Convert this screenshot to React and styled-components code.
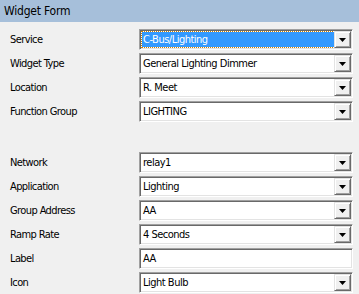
import React from 'react'
import styled, { createGlobalStyle } from 'styled-components'

const Global = createGlobalStyle`
  html, body { margin: 0; padding: 0; background: #f0f0f0; }
  body { font-family: "DejaVu Sans Condensed", "DejaVu Sans", sans-serif; font-size: 11px; color: #000; }
`

const Panel = styled.div`
  width: 359px;
  height: 294px;
  overflow: hidden;
  background: #f0f0f0;
`

const Header = styled.div`
  height: 22px;
  background: #a6bfda;
  padding-left: 4px;
  display: flex;
  align-items: center;
  font-size: 12px;
  letter-spacing: -0.2px;
`

const Section = styled.div`
  padding: ${p => p.$top}px 6px 0 9px;
  display: flex;
  flex-direction: column;
  gap: 3px;
`

const Row = styled.div`
  display: flex;
  align-items: center;
  height: 21px;
`

const Label = styled.div`
  width: 129px;
  letter-spacing: -0.6px;
  padding-left: 1px;
`

const Field = styled.div`
  flex: 1;
  height: 21px;
  box-sizing: border-box;
  display: flex;
  background: #fff;
  border-top: 1px solid #a0a0a0;
  border-left: 1px solid #a0a0a0;
  border-right: 1px solid #fff;
  border-bottom: 1px solid #fff;
  box-shadow: inset 1px 1px 0 #696969, inset -1px -1px 0 #e3e3e3;
  padding: 2px;
`

const Value = styled.div`
  flex: 1;
  display: flex;
  align-items: center;
  padding-left: 1px;
  letter-spacing: -0.5px;
  background: ${p => (p.$selected ? '#3399ff' : 'transparent')};
  color: ${p => (p.$selected ? '#fff' : '#000')};
  outline: ${p => (p.$selected ? '1px dotted #d08000' : 'none')};
  white-space: nowrap;
  overflow: hidden;
`

const Button = styled.div`
  width: 17px;
  margin: -1px -1px -1px 0;
  box-sizing: border-box;
  background: #f0f0f0;
  border-top: 1px solid #e3e3e3;
  border-left: 1px solid #e3e3e3;
  border-right: 1px solid #696969;
  border-bottom: 1px solid #696969;
  box-shadow: inset 1px 1px 0 #fff, inset -1px -1px 0 #a0a0a0;
  display: flex;
  align-items: center;
  justify-content: center;
`

const Arrow = () => (
  <svg width="7" height="4" viewBox="0 0 7 4">
    <path d="M0 0h7L3.5 4z" fill="#000" />
  </svg>
)

const Combo = ({ value, selected, plain }) => (
  <Field>
    <Value $selected={selected}>{value}</Value>
    {!plain && (
      <Button>
        <Arrow />
      </Button>
    )}
  </Field>
)

const top = [
  ['Service', 'C-Bus/Lighting', true],
  ['Widget Type', 'General Lighting Dimmer'],
  ['Location', 'R. Meet'],
  ['Function Group', 'LIGHTING'],
]

const bottom = [
  ['Network', 'relay1'],
  ['Application', 'Lighting'],
  ['Group Address', 'AA'],
  ['Ramp Rate', '4 Seconds'],
  ['Label', 'AA', false, true],
  ['Icon', 'Light Bulb'],
]

const FormRows = ({ rows }) =>
  rows.map(([label, value, selected, plain]) => (
    <Row key={label}>
      <Label>{label}</Label>
      <Combo value={value} selected={selected} plain={plain} />
    </Row>
  ))

export default function App() {
  return (
    <Panel>
      <Global />
      <Header>Widget Form</Header>
      <Section $top={7}>
        <FormRows rows={top} />
      </Section>
      <Section $top={30}>
        <FormRows rows={bottom} />
      </Section>
    </Panel>
  )
}
